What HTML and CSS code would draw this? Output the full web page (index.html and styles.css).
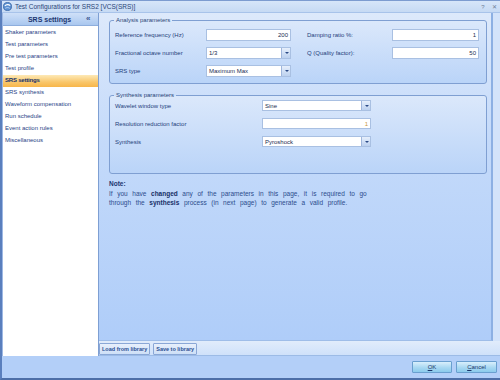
FILE: index.html
```html
<!DOCTYPE html>
<html lang="en">
<head>
    <meta charset="UTF-8">
    <title>Test Configurations for SRS2 [VCS(SRS)]</title>
    <link rel="stylesheet" href="styles.css">
</head>
<body>
    <div class="window">
        <div class="titlebar">
            <svg class="app-icon" width="9" height="9" viewBox="0 0 10 10">
                <circle cx="5" cy="5" r="4.5" fill="#5b8fd0" stroke="#2f5f9f" stroke-width="0.8"/>
                <path d="M2 4.5 C3.5 2.5 6.5 2.5 8 4" stroke="#ffffff" stroke-width="1.2" fill="none"/>
                <path d="M2.5 7 C4 6 6 6 7.5 7" stroke="#cfe4ff" stroke-width="0.9" fill="none"/>
            </svg>
            <span class="title">Test Configurations for SRS2 [VCS(SRS)]</span>
            <span class="title-btn">?</span>
            <span class="title-btn">&#x2715;</span>
        </div>

        <div class="body">
            <div class="sidebar">
                <div class="side-head">
                    <span class="side-title">SRS settings</span>
                    <span class="collapse">&laquo;</span>
                </div>
                <ul class="nav">
                    <li>Shaker parameters</li>
                    <li>Test parameters</li>
                    <li>Pre test parameters</li>
                    <li>Test profile</li>
                    <li class="active">SRS settings</li>
                    <li>SRS synthesis</li>
                    <li>Waveform compensation</li>
                    <li>Run schedule</li>
                    <li>Event action rules</li>
                    <li>Miscellaneous</li>
                </ul>
            </div>

            <div class="main">
                <div class="panel">
                    <fieldset class="group analysis">
                        <legend>Analysis parameters</legend>
                        <div class="grid4">
                            <label>Reference frequency (Hz)</label>
                            <div class="field num">200</div>
                            <label>Damping ratio %:</label>
                            <div class="field num">1</div>

                            <label>Fractional octave number</label>
                            <div class="field select"><span>1/3</span><i class="drop"></i></div>
                            <label>Q (Quality factor):</label>
                            <div class="field num">50</div>

                            <label>SRS type</label>
                            <div class="field select"><span>Maximum Max</span><i class="drop"></i></div>
                        </div>
                    </fieldset>

                    <fieldset class="group synthesis">
                        <legend>Synthesis parameters</legend>
                        <div class="grid2">
                            <label>Wavelet window type</label>
                            <div class="field select"><span>Sine</span><i class="drop"></i></div>

                            <label>Resolution reduction factor</label>
                            <div class="field num dim">1</div>

                            <label>Synthesis</label>
                            <div class="field select"><span>Pyroshock</span><i class="drop"></i></div>
                        </div>
                    </fieldset>

                    <div class="note">
                        <div class="note-head">Note:</div>
                        <p>If you have <b>changed</b> any of the parameters in this page, it is required to go<br>
                        through the <b>synthesis</b> process (in next page) to generate a valid profile.</p>
                    </div>
                </div>
                <div class="libbar">
                    <button class="lib-btn">Load from library</button>
                    <button class="lib-btn">Save to library</button>
                </div>
            </div>
        </div>

        <div class="footer">
            <button class="dlg-btn"><u>O</u>K</button>
            <button class="dlg-btn"><u>C</u>ancel</button>
        </div>
    </div>
</body>
</html>
```

FILE: styles.css
```css
:root {
    --navy: #1b3569;
    --label: #24407a;
    --border: #7f9fd2;
    --field-border: #a9c0e2;
}

* {
    box-sizing: border-box;
}

body {
    margin: 0;
    font-family: 'Liberation Sans', Arial, sans-serif;
    font-size: 6px;
    color: var(--navy);
}

.window {
    width: 500px;
    height: 380px;
    display: flex;
    flex-direction: column;
    background-color: #b3cff8;
    border-left: 2px solid #5a7fbd;
    border-bottom: 2px solid #4d6fa8;
    border-top: 1px solid #7d9cd0;
    overflow: hidden;
}

.titlebar {
    height: 12px;
    display: flex;
    align-items: center;
    padding-left: 1px;
    background: linear-gradient(#d7e6f9, #c6daf4);
    border-bottom: 1px solid #a8c3ea;
}

.app-icon {
    margin-right: 3px;
}

.title {
    flex: 1;
    font-size: 6.5px;
    color: #2a4577;
}

.title-btn {
    width: 10px;
    text-align: center;
    color: #6f7f99;
    font-size: 6px;
    margin-right: 1px;
}

.body {
    flex: 1;
    display: flex;
}

.sidebar {
    width: 98px;
    background-color: #ffffff;
    border-left: 1px solid #9db8e4;
    border-right: 1px solid #7e9fd3;
}

.side-head {
    height: 13px;
    display: flex;
    align-items: center;
    background: linear-gradient(#cfe0f8, #a9c7ef);
    border-bottom: 1px solid #8eaedd;
}

.side-title {
    flex: 1;
    text-align: center;
    font-weight: bold;
    font-size: 7px;
    color: #1c3670;
    padding-left: 10px;
}

.collapse {
    width: 12px;
    font-size: 8px;
    font-weight: bold;
    color: #3a5690;
    line-height: 1;
}

.nav {
    list-style: none;
    margin: 0;
    padding: 1px 0 0;
}

.nav li {
    height: 12px;
    line-height: 11px;
    padding-left: 2px;
    color: #1f3f86;
    font-size: 6px;
}

.nav li.active {
    background: linear-gradient(#fde9b6, #f9c66a 60%, #f7b64a);
    color: #14306a;
    font-weight: bold;
    letter-spacing: -0.2px;
}

.main {
    flex: 1;
    display: flex;
    flex-direction: column;
    background-color: #d3e3fa;
}

.panel {
    flex: 1;
    padding: 3px 4px 0 10px;
    background: linear-gradient(#dde9fb, #c4dafa 40%, #afcdf9);
    border-right: 2px solid #8db0e3;
    margin-right: 7px;
    border-bottom: 1px solid #9fbde8;
}

.group {
    margin: 0;
    border: 1px solid var(--border);
    border-radius: 3px;
    background: linear-gradient(#dbe8fb, #bad4f8);
    padding: 0 7px 0 5px;
}

.group legend {
    font-size: 6px;
    color: #2a4577;
    padding: 0 2px;
    margin-left: -1px;
    line-height: 8px;
}

.analysis {
    height: 68px;
    padding-top: 5px;
}

.synthesis {
    height: 83px;
    margin-top: 7px;
    padding-top: 1px;
}

.grid4 {
    display: grid;
    grid-template-columns: 91px 85px 101px 87px;
    row-gap: 6px;
    align-items: center;
}

.grid4 label:nth-of-type(even) {
    padding-left: 16px;
}

.grid2 {
    display: grid;
    grid-template-columns: 147px 109px;
    row-gap: 7px;
    align-items: center;
}

label {
    font-size: 6px;
    color: var(--label);
}

.field {
    height: 12px;
    background-color: #ffffff;
    border: 1px solid var(--field-border);
    font-size: 6px;
    color: #1a2c50;
    display: flex;
    align-items: center;
    padding: 0 2px;
}

.grid2 .field {
    height: 11px;
}

.field.num {
    justify-content: flex-end;
}

.field.dim {
    color: #c79a3a;
}

.field.select {
    padding-right: 0;
}

.field.select span {
    flex: 1;
}

.drop {
    width: 9px;
    height: 100%;
    background: linear-gradient(#e6effc, #bcd1ef);
    border-left: 1px solid #9fb6dc;
    position: relative;
}

.drop::after {
    content: "";
    position: absolute;
    left: 2.5px;
    top: 4px;
    border-left: 2px solid transparent;
    border-right: 2px solid transparent;
    border-top: 2px solid #2b4a86;
}

.note {
    margin-top: 5px;
    padding-left: 0;
    color: #2c4c8c;
    font-size: 6.5px;
}

.note-head {
    font-weight: bold;
    color: #1c3670;
    line-height: 9px;
}

.note p {
    margin: 1px 0 0;
    line-height: 9px;
    word-spacing: 2.8px;
}

.note b {
    color: #162f66;
}

.libbar {
    height: 15px;
    display: flex;
    align-items: center;
    gap: 3px;
    padding-top: 1px;
    background: linear-gradient(#e1ecfb, #cfe1fa);
    border-bottom: 1px solid #9cbbe6;
}

.lib-btn {
    height: 12px;
    padding: 0 2px;
    font-family: inherit;
    font-size: 5.5px;
    font-weight: bold;
    color: #2b4f93;
    background: linear-gradient(#e8f0fc, #cddff7);
    border: 1px solid #8aa7d6;
    border-radius: 1px;
}

.footer {
    height: 22px;
    display: flex;
    justify-content: flex-end;
    align-items: center;
    gap: 4px;
    padding-right: 3px;
    background-color: #b3cff8;
}

.dlg-btn {
    height: 12px;
    width: 40px;
    font-family: inherit;
    font-size: 6px;
    color: #1b3569;
    background: linear-gradient(#d9effc, #a9d8f2 55%, #8ccbec);
    border: 1px solid #6a9fcf;
    border-radius: 1px;
}

.dlg-btn + .dlg-btn {
    width: 41px;
}
```
